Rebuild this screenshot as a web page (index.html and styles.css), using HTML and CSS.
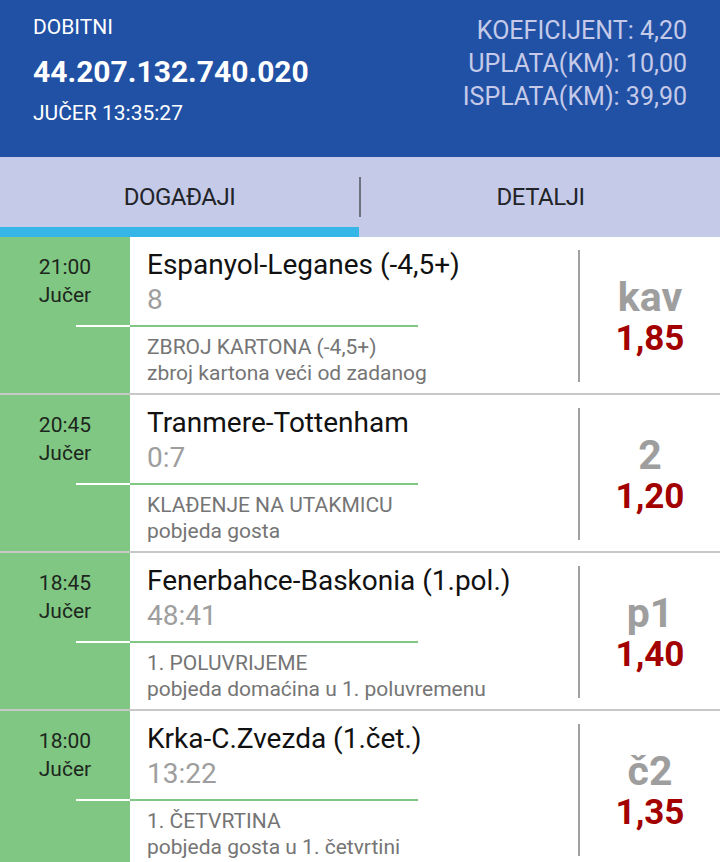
FILE: index.html
```html
<!DOCTYPE html>
<html lang="hr">
<head>
<meta charset="utf-8">
<title>Listić</title>
<link rel="stylesheet" href="styles.css">
</head>
<body>
<div class="app">
  <header class="head">
    <div class="head-left">
      <div class="status">DOBITNI</div>
      <div class="ticket">44.207.132.740.020</div>
      <div class="when">JUČER 13:35:27</div>
    </div>
    <div class="head-right">
      <div>KOEFICIJENT: 4,20</div>
      <div>UPLATA(KM): 10,00</div>
      <div>ISPLATA(KM): 39,90</div>
    </div>
  </header>

  <nav class="tabs">
    <div class="tab tab-active">
      <div class="tab-label">DOGAĐAJI</div>
      <div class="tab-indicator"></div>
    </div>
    <div class="tab-sep"></div>
    <div class="tab">
      <div class="tab-label">DETALJI</div>
    </div>
  </nav>

  <div class="events">
    <div class="ev">
      <div class="ev-time">
        <div class="ev-time-top"><div>21:00</div><div>Jučer</div></div>
        <div class="ev-time-line"></div>
      </div>
      <div class="ev-main">
        <div class="ev-top">
          <div class="teams">Espanyol-Leganes (-4,5+)</div>
          <div class="score">8</div>
        </div>
        <div class="ev-line"></div>
        <div class="ev-bot">
          <div class="market">ZBROJ KARTONA (-4,5+)</div>
          <div class="desc">zbroj kartona veći od zadanog</div>
        </div>
      </div>
      <div class="ev-odd">
        <div class="tip">kav</div>
        <div class="odd">1,85</div>
      </div>
    </div>

    <div class="ev">
      <div class="ev-time">
        <div class="ev-time-top"><div>20:45</div><div>Jučer</div></div>
        <div class="ev-time-line"></div>
      </div>
      <div class="ev-main">
        <div class="ev-top">
          <div class="teams">Tranmere-Tottenham</div>
          <div class="score">0:7</div>
        </div>
        <div class="ev-line"></div>
        <div class="ev-bot">
          <div class="market">KLAĐENJE NA UTAKMICU</div>
          <div class="desc">pobjeda gosta</div>
        </div>
      </div>
      <div class="ev-odd">
        <div class="tip">2</div>
        <div class="odd">1,20</div>
      </div>
    </div>

    <div class="ev">
      <div class="ev-time">
        <div class="ev-time-top"><div>18:45</div><div>Jučer</div></div>
        <div class="ev-time-line"></div>
      </div>
      <div class="ev-main">
        <div class="ev-top">
          <div class="teams">Fenerbahce-Baskonia (1.pol.)</div>
          <div class="score">48:41</div>
        </div>
        <div class="ev-line"></div>
        <div class="ev-bot">
          <div class="market">1. POLUVRIJEME</div>
          <div class="desc">pobjeda domaćina u 1. poluvremenu</div>
        </div>
      </div>
      <div class="ev-odd">
        <div class="tip">p1</div>
        <div class="odd">1,40</div>
      </div>
    </div>

    <div class="ev">
      <div class="ev-time">
        <div class="ev-time-top"><div>18:00</div><div>Jučer</div></div>
        <div class="ev-time-line"></div>
      </div>
      <div class="ev-main">
        <div class="ev-top">
          <div class="teams">Krka-C.Zvezda (1.čet.)</div>
          <div class="score">13:22</div>
        </div>
        <div class="ev-line"></div>
        <div class="ev-bot">
          <div class="market">1. ČETVRTINA</div>
          <div class="desc">pobjeda gosta u 1. četvrtini</div>
        </div>
      </div>
      <div class="ev-odd">
        <div class="tip">č2</div>
        <div class="odd">1,35</div>
      </div>
    </div>
  </div>
</div>
</body>
</html>
```

FILE: styles.css
```css
* { box-sizing: border-box; }

html, body {
  margin: 0;
  padding: 0;
  width: 720px;
  height: 862px;
  overflow: hidden;
  background: #ffffff;
  font-family: Roboto, "Noto Sans", "DejaVu Sans", sans-serif;
}

.app {
  width: 720px;
}

/* Header */
.head {
  height: 157px;
  background: #2151a5;
  display: flex;
  justify-content: space-between;
  padding: 14px 33px 0 33px;
}

.head-left {
  color: #ffffff;
}

.status {
  font-size: 21px;
  line-height: 26px;
}

.ticket {
  font-size: 30px;
  font-weight: 700;
  line-height: 40px;
  margin-top: 12px;
}

.when {
  font-size: 21px;
  line-height: 26px;
  margin-top: 8px;
}

.head-right {
  color: #c5cae9;
  font-size: 25px;
  line-height: 33px;
  text-align: right;
}

/* Tabs */
.tabs {
  height: 80px;
  background: #c5cae9;
  display: flex;
}

.tab {
  width: 359px;
  display: flex;
  flex-direction: column;
  align-items: stretch;
}

.tab-label {
  margin-top: 20px;
  height: 40px;
  line-height: 40px;
  text-align: center;
  font-size: 24px;
  color: #222428;
  letter-spacing: -0.5px;
}

.tab-indicator {
  margin-top: 10px;
  height: 10px;
  background: #35b6e6;
}

.tab-sep {
  width: 2px;
  height: 40px;
  margin-top: 20px;
  background: #6e7180;
}

/* Events */
.ev {
  display: flex;
  height: 158px;
  border-bottom: 2px solid #c8c8c8;
}

.ev-time {
  width: 130px;
  background: #81c784;
}

.ev-time-top {
  height: 88px;
  padding-top: 16px;
  text-align: center;
  font-size: 21px;
  line-height: 28px;
  color: #1c261c;
}

.ev-time-line {
  height: 2px;
  margin-left: 76px;
  background: #ffffff;
}

.ev-main {
  width: 448px;
  padding-left: 17px;
}

.ev-top {
  height: 88px;
  padding-top: 11px;
}

.teams {
  font-size: 28px;
  line-height: 34px;
  color: #111111;
  white-space: nowrap;
}

.score {
  font-size: 28px;
  line-height: 36px;
  color: #9e9e9e;
}

.ev-line {
  height: 2px;
  width: 288px;
  margin-left: -17px;
  background: #81c784;
}

.ev-bot {
  padding-top: 7px;
}

.market,
.desc {
  font-size: 21px;
  line-height: 26px;
  color: #757575;
  white-space: nowrap;
}

.ev-odd {
  flex: 1;
  margin: 13px 0 11px 0;
  border-left: 2px solid #a0a0a0;
  display: flex;
  flex-direction: column;
  align-items: center;
  padding-top: 24px;
}

.tip {
  font-size: 41px;
  font-weight: 700;
  line-height: 46px;
  color: #9e9e9e;
}

.odd {
  font-size: 35px;
  font-weight: 700;
  line-height: 38px;
  color: #a30000;
}
```
